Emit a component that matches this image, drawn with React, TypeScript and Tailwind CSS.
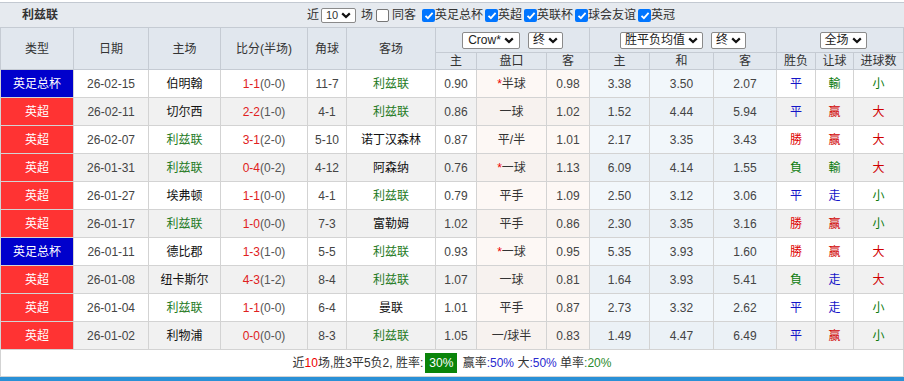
import React from 'react';

// 利兹联 recent matches table

type Row = {
  league: string;
  date: string;
  home: string;
  score: string;
  half: string;
  corner: string;
  away: string;
  o1: string;
  hc: string;
  star?: boolean;
  o2: string;
  w: string;
  d: string;
  l: string;
  res: string;
  ah: string;
  ou: string;
};

const TEAM = '利兹联';

const rows: Row[] = [
  { league: '英足总杯', date: '26-02-15', home: '伯明翰', score: '1-1', half: '(0-0)', corner: '11-7', away: TEAM, o1: '0.90', hc: '半球', star: true, o2: '0.98', w: '3.38', d: '3.50', l: '2.07', res: '平', ah: '輸', ou: '小' },
  { league: '英超', date: '26-02-11', home: '切尔西', score: '2-2', half: '(1-0)', corner: '4-1', away: TEAM, o1: '0.86', hc: '一球', o2: '1.02', w: '1.52', d: '4.44', l: '5.94', res: '平', ah: '赢', ou: '大' },
  { league: '英超', date: '26-02-07', home: TEAM, score: '3-1', half: '(2-0)', corner: '5-10', away: '诺丁汉森林', o1: '0.87', hc: '平/半', o2: '1.01', w: '2.17', d: '3.35', l: '3.43', res: '勝', ah: '赢', ou: '大' },
  { league: '英超', date: '26-01-31', home: TEAM, score: '0-4', half: '(0-2)', corner: '4-12', away: '阿森纳', o1: '0.76', hc: '一球', star: true, o2: '1.13', w: '6.09', d: '4.14', l: '1.55', res: '負', ah: '輸', ou: '大' },
  { league: '英超', date: '26-01-27', home: '埃弗顿', score: '1-1', half: '(0-0)', corner: '4-1', away: TEAM, o1: '0.79', hc: '平手', o2: '1.09', w: '2.50', d: '3.12', l: '3.06', res: '平', ah: '走', ou: '小' },
  { league: '英超', date: '26-01-17', home: TEAM, score: '1-0', half: '(0-0)', corner: '7-3', away: '富勒姆', o1: '1.02', hc: '平手', o2: '0.86', w: '2.30', d: '3.35', l: '3.16', res: '勝', ah: '赢', ou: '小' },
  { league: '英足总杯', date: '26-01-11', home: '德比郡', score: '1-3', half: '(1-0)', corner: '5-5', away: TEAM, o1: '0.93', hc: '一球', star: true, o2: '0.95', w: '5.35', d: '3.93', l: '1.60', res: '勝', ah: '赢', ou: '大' },
  { league: '英超', date: '26-01-08', home: '纽卡斯尔', score: '4-3', half: '(1-2)', corner: '8-4', away: TEAM, o1: '1.07', hc: '一球', o2: '0.81', w: '1.64', d: '3.93', l: '5.41', res: '負', ah: '走', ou: '大' },
  { league: '英超', date: '26-01-04', home: TEAM, score: '1-1', half: '(0-0)', corner: '6-4', away: '曼联', o1: '1.01', hc: '平手', o2: '0.87', w: '2.73', d: '3.32', l: '2.62', res: '平', ah: '走', ou: '小' },
  { league: '英超', date: '26-01-02', home: '利物浦', score: '0-0', half: '(0-0)', corner: '8-3', away: TEAM, o1: '1.05', hc: '一/球半', o2: '0.83', w: '1.49', d: '4.47', l: '6.49', res: '平', ah: '赢', ou: '小' },
];

const resColor: Record<string, string> = {
  平: 'text-[#1515c8]',
  勝: 'text-[#e00000]',
  負: 'text-[#0a7a0a]',
  輸: 'text-[#0a7a0a]',
  赢: 'text-[#d00000]',
  走: 'text-[#1515c8]',
  小: 'text-[#0a7a0a]',
  大: 'text-[#d00000]',
};

function Chevron() {
  return (
    <svg width="10" height="7" viewBox="0 0 10 7" className="ml-[3px] shrink-0">
      <path d="M1.2 1.4l3.8 3.6 3.8-3.6" stroke="#111" strokeWidth="2.2" fill="none" />
    </svg>
  );
}

function FakeSelect({ label, className = '' }: { label: string; className?: string }) {
  return (
    <span
      className={`inline-flex items-center justify-center shrink-0 whitespace-nowrap h-[17px] bg-white border border-[#8a8a8a] rounded-[2px] px-[5px] text-[12px] leading-none text-[#222] ${className}`}
    >
      {label}
      <Chevron />
    </span>
  );
}

function Check({ on }: { on: boolean }) {
  if (!on) {
    return <span className="inline-block w-[13px] h-[13px] bg-white border border-[#767676] rounded-[2px] mx-[3px]" />;
  }
  return (
    <span className="inline-flex items-center justify-center w-[13px] h-[13px] bg-[#0075ff] rounded-[2px] ml-[2px]">
      <svg width="10" height="9" viewBox="0 0 10 9">
        <path d="M1.5 4.8l2.4 2.4L8.6 1.8" stroke="#fff" strokeWidth="1.8" fill="none" />
      </svg>
    </span>
  );
}

const th = 'border border-[#c5cbd3] font-normal text-[#333] text-[12px]';
const td = 'border border-[#d3d3d3] text-center text-[12px]';

export default function App() {
  return (
    <div className="w-[904px] h-[381px] bg-white overflow-hidden" style={{ fontFamily: '"Liberation Sans", "Noto Sans CJK SC", sans-serif' }}>
      <div className="mt-[2px] h-[25px] bg-[#e6eaef] border-t border-[#c3c9d1] flex items-center text-[12px] text-[#333]">
        <span className="pl-[22px] w-[307px] font-bold">利兹联</span>
        <div className="flex items-center">
          <span>近</span>
          <span className="inline-flex items-center justify-center h-[15px] w-[35px] bg-white border border-[#8a8a8a] rounded-[2px] ml-[2px] mr-[5px] text-[11px] leading-none">
            10
            <Chevron />
          </span>
          <span>场</span>
          <Check on={false} />
          <span className="mr-[4px]">同客</span>
          <Check on />
          <span>英足总杯</span>
          <Check on />
          <span>英超</span>
          <Check on />
          <span>英联杯</span>
          <Check on />
          <span>球会友谊</span>
          <Check on />
          <span>英冠</span>
        </div>
      </div>

      <table className="w-[903px] table-fixed border-collapse">
        <colgroup>
          <col className="w-[73px]" />
          <col className="w-[75px]" />
          <col className="w-[72px]" />
          <col className="w-[87px]" />
          <col className="w-[39px]" />
          <col className="w-[89px]" />
          <col className="w-[41px]" />
          <col className="w-[70px]" />
          <col className="w-[43px]" />
          <col className="w-[60px]" />
          <col className="w-[64px]" />
          <col className="w-[63px]" />
          <col className="w-[39px]" />
          <col className="w-[38px]" />
          <col className="w-[50px]" />
        </colgroup>
        <thead className="bg-[#e1e7ee]">
          <tr className="h-[25px]">
            <th rowSpan={2} className={th}>类型</th>
            <th rowSpan={2} className={th}>日期</th>
            <th rowSpan={2} className={th}>主场</th>
            <th rowSpan={2} className={th}>比分(半场)</th>
            <th rowSpan={2} className={th}>角球</th>
            <th rowSpan={2} className={th}>客场</th>
            <th colSpan={3} className={th}>
              <div className="flex items-center justify-center gap-[8px]">
                <FakeSelect label="Crow*" className="w-[58px]" />
                <FakeSelect label="终" className="w-[35px]" />
              </div>
            </th>
            <th colSpan={3} className={th}>
              <div className="flex items-center justify-center gap-[8px]">
                <FakeSelect label="胜平负均值" className="w-[83px]" />
                <FakeSelect label="终" className="w-[35px]" />
              </div>
            </th>
            <th colSpan={3} className={th}>
              <div className="flex items-center justify-center pl-[6px]">
                <FakeSelect label="全场" className="w-[47px]" />
              </div>
            </th>
          </tr>
          <tr className="h-[17px] leading-[16px]">
            <th className={th}>主</th>
            <th className={th}>盘口</th>
            <th className={th}>客</th>
            <th className={th}>主</th>
            <th className={th}>和</th>
            <th className={th}>客</th>
            <th className={th}>胜负</th>
            <th className={th}>让球</th>
            <th className={th}>进球数</th>
          </tr>
        </thead>
        <tbody>
          {rows.map((r, i) => {
            const even = i % 2 === 1;
            const base = even ? 'bg-[#f1f1f1]' : 'bg-white';
            const pink = even ? 'bg-[#f7f2ef]' : 'bg-[#fdf8f5]';
            const blue = even ? 'bg-[#ebf1f6]' : 'bg-[#f2f7fb]';
            const teamCls = (name: string) => (name === TEAM ? 'text-[#1e7a1e]' : 'text-[#111]');
            return (
              <tr key={i} className={`h-[28px] ${base}`}>
                <td className={`${td} text-white ${r.league === '英超' ? 'bg-[#ff3333]' : 'bg-[#0000cc]'}`}>{r.league}</td>
                <td className={`${td} text-[#444]`}>{r.date}</td>
                <td className={`${td} ${teamCls(r.home)}`}>{r.home}</td>
                <td className={td}>
                  <span className="text-[#e02020]">{r.score}</span>
                  <span className="text-[#555]">{r.half}</span>
                </td>
                <td className={`${td} text-[#444]`}>{r.corner}</td>
                <td className={`${td} ${teamCls(r.away)}`}>{r.away}</td>
                <td className={`${td} text-[#444]`}>{r.o1}</td>
                <td className={`${td} ${pink} text-[#333]`}>
                  {r.star && <span className="text-[#e00]">*</span>}
                  {r.hc}
                </td>
                <td className={`${td} ${pink} text-[#444]`}>{r.o2}</td>
                <td className={`${td} ${blue} text-[#444]`}>{r.w}</td>
                <td className={`${td} ${blue} text-[#444]`}>{r.d}</td>
                <td className={`${td} ${blue} text-[#444]`}>{r.l}</td>
                <td className={`${td} ${resColor[r.res]}`}>{r.res}</td>
                <td className={`${td} ${resColor[r.ah]}`}>{r.ah}</td>
                <td className={`${td} ${resColor[r.ou]}`}>{r.ou}</td>
              </tr>
            );
          })}
          <tr className="h-[27px] bg-white">
            <td colSpan={15} className="border border-[#d3d3d3] text-center text-[12px] text-[#333]">
              近<span className="text-[#e00]">10</span>场,胜3平5负2, 胜率:
              <span className="inline-block bg-[#0a840a] text-white px-[4px] leading-[20px] mx-[2px]">30%</span>
              {' '}赢率<span className="text-[#2a2ad0]">:50%</span> 大<span className="text-[#2a2ad0]">:50%</span> 单率
              <span className="text-[#2a8a2a]">:20%</span>
            </td>
          </tr>
        </tbody>
      </table>
      <div className="h-[6px] bg-[#2a90d6]" />
    </div>
  );
}
